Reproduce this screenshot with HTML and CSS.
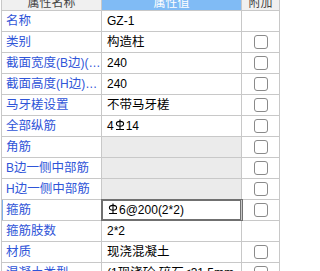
FILE: index.html
```html
<!DOCTYPE html>
<html lang="zh">
<head>
<meta charset="utf-8">
<link rel="stylesheet" href="styles.css">
</head>
<body>
<div class="sheet">
  <div class="row head">
    <div class="cell hname">属性名称</div>
    <div class="cell hval">属性值</div>
    <div class="cell hadd">附加</div>
  </div>
  <div class="row">
    <div class="cell name"><span class="cjk">名称</span></div>
    <div class="cell val">GZ-1</div>
    <div class="cell add"></div>
  </div>
  <div class="row">
    <div class="cell name"><span class="cjk">类别</span></div>
    <div class="cell val"><span class="cjk">构造柱</span></div>
    <div class="cell add"><span class="chk"></span></div>
  </div>
  <div class="row">
    <div class="cell name"><span class="cjk">截面宽度</span>(B<span class="cjk">边</span>)(mm)</div>
    <div class="cell val">240</div>
    <div class="cell add"><span class="chk"></span></div>
  </div>
  <div class="row">
    <div class="cell name"><span class="cjk">截面高度</span>(H<span class="cjk">边</span>)(mm)</div>
    <div class="cell val">240</div>
    <div class="cell add"><span class="chk"></span></div>
  </div>
  <div class="row">
    <div class="cell name"><span class="cjk">马牙槎设置</span></div>
    <div class="cell val"><span class="cjk">不带马牙槎</span></div>
    <div class="cell add"><span class="chk"></span></div>
  </div>
  <div class="row">
    <div class="cell name"><span class="cjk">全部纵筋</span></div>
    <div class="cell val">4<svg class="rebar" viewBox="0 0 10 12" width="10" height="12"><path d="M5 0.5V11M1 10.5H9" stroke="#000" stroke-width="1.1" fill="none"/><ellipse cx="5" cy="4.8" rx="3.6" ry="2.4" stroke="#000" stroke-width="1.1" fill="none"/></svg>14</div>
    <div class="cell add"><span class="chk"></span></div>
  </div>
  <div class="row">
    <div class="cell name"><span class="cjk">角筋</span></div>
    <div class="cell val dim"></div>
    <div class="cell add"><span class="chk"></span></div>
  </div>
  <div class="row">
    <div class="cell name">B<span class="cjk">边一侧中部筋</span></div>
    <div class="cell val dim"></div>
    <div class="cell add"><span class="chk"></span></div>
  </div>
  <div class="row">
    <div class="cell name">H<span class="cjk">边一侧中部筋</span></div>
    <div class="cell val dim"></div>
    <div class="cell add"><span class="chk"></span></div>
  </div>
  <div class="row current">
    <div class="cell name"><span class="cjk">箍筋</span></div>
    <div class="cell val focus"><svg class="rebar" viewBox="0 0 10 12" width="10" height="12"><path d="M5 0.5V11M1 10.5H9" stroke="#000" stroke-width="1.1" fill="none"/><ellipse cx="5" cy="4.8" rx="3.6" ry="2.4" stroke="#000" stroke-width="1.1" fill="none"/></svg>6@200(2*2)</div>
    <div class="cell add"><span class="chk"></span></div>
  </div>
  <div class="row">
    <div class="cell name"><span class="cjk">箍筋肢数</span></div>
    <div class="cell val">2*2</div>
    <div class="cell add"></div>
  </div>
  <div class="row">
    <div class="cell name"><span class="cjk">材质</span></div>
    <div class="cell val"><span class="cjk">现浇混凝土</span></div>
    <div class="cell add"><span class="chk"></span></div>
  </div>
  <div class="row">
    <div class="cell name"><span class="cjk">混凝土类型</span></div>
    <div class="cell val">(1<span class="cjk">现浇砼 碎石</span>&lt;31.5mm</div>
    <div class="cell add"><span class="chk"></span></div>
  </div>
</div>
</body>
</html>
```
FILE: styles.css
```css
html, body {
  margin: 0;
  padding: 0;
  background: #ffffff;
  overflow: hidden;
}

body {
  font-family: "Liberation Sans", "Noto Sans CJK SC", sans-serif;
  font-size: 12px;
  color: #000;
}

.sheet {
  margin: -10px 0 0 1px;
  width: 278px;
  border-left: 1px solid #c8c8c8;
}

.row {
  display: grid;
  grid-template-columns: 100px 140px 38px;
  height: 21px;
  border-bottom: 1px solid #c8c8c8;
  box-sizing: border-box;
}

.cell {
  border-right: 1px solid #c8c8c8;
  height: 20px;
  line-height: 20px;
  white-space: nowrap;
  overflow: hidden;
  text-overflow: ellipsis;
}

.head .cell {
  display: flex;
  align-items: flex-end;
  justify-content: center;
  line-height: 14px;
  text-overflow: clip;
}

.hname,
.hadd {
  background: #f0f0f0;
  color: #444;
}

.hval {
  background: #80bbf5;
  color: #ffffff;
}

.name {
  padding-left: 4px;
  color: #2f55d8;
}

.val {
  padding-left: 5px;
}

.cjk {
  font-size: 12.5px;
}

.dim {
  background: #ebebeb;
}

.focus {
  box-shadow: 0 0 0 1px #707070, inset 0 0 0 1px #707070;
}

.current .name {
  box-shadow: inset 1px 0 0 #7fb2ea;
}

.rebar {
  vertical-align: -1px;
  margin: 0 1px;
}

.add {
  display: flex;
  align-items: center;
  justify-content: center;
}

.chk {
  display: block;
  width: 14px;
  height: 14px;
  box-sizing: border-box;
  border: 1px solid #8a8a8a;
  border-radius: 3px;
  background: #fff;
}
```
